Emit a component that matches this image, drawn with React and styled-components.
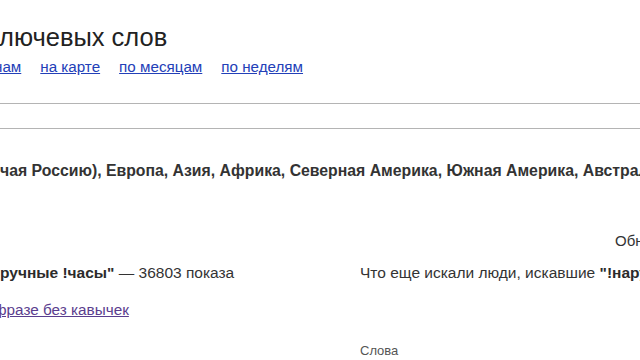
import React from 'react';
import styled, { createGlobalStyle } from 'styled-components';

const GlobalStyle = createGlobalStyle`
  html, body {
    margin: 0;
    padding: 0;
    background: #fff;
    overflow: hidden;
  }
  body {
    font-family: "Liberation Sans", Arial, sans-serif;
    color: #333;
  }
`;

const Page = styled.div`
  width: 640px;
  height: 360px;
  overflow: hidden;
  white-space: nowrap;
`;

const Line = styled.div`
  margin-left: ${(p) => p.shift || 0}px;
`;

const Title = styled(Line)`
  padding-top: 22px;
  font-size: 25.5px;
  line-height: 30px;
  color: #222;
`;

const Tabs = styled.div`
  display: flex;
  gap: 19px;
  margin-top: 6px;
  font-size: 15.2px;
  line-height: 18px;
  margin-left: ${(p) => p.shift || 0}px;
`;

const Tab = styled.a`
  color: #2340b8;
  text-decoration: underline;
  cursor: pointer;
`;

const SearchBar = styled.div`
  margin-top: 27px;
  height: 24px;
  border-top: 1px solid #b4b4b4;
  border-bottom: 1px solid #b4b4b4;
`;

const Regions = styled(Line)`
  margin-top: 33px;
  font-size: 15.8px;
  line-height: 18px;
  font-weight: bold;
  color: #333;
`;

const Meta = styled.div`
  margin-top: 52px;
  padding-left: 615px;
  font-size: 15px;
  line-height: 18px;
  color: #333;
`;

const Columns = styled.div`
  display: grid;
  grid-template-columns: 360px 1fr;
  margin-top: 14px;
`;

const Column = styled.div`
  display: flex;
  flex-direction: column;
`;

const Summary = styled(Line)`
  font-size: 15.5px;
  line-height: 18px;
  color: #333;
  b {
    color: #2b2b2b;
  }
`;

const Visited = styled.a`
  display: block;
  margin-top: 19px;
  margin-left: ${(p) => p.shift || 0}px;
  font-size: 15.3px;
  line-height: 18px;
  color: #5a3d8e;
  text-decoration: underline;
  cursor: pointer;
`;

const TableHead = styled.div`
  margin-top: 61px;
  font-size: 13px;
  line-height: 16px;
  color: #555;
`;

export default function App() {
  return (
    <Page>
      <GlobalStyle />
      <Title shift={-1}>лючевых слов</Title>
      <Tabs shift={-6}>
        <Tab>нам</Tab>
        <Tab>на карте</Tab>
        <Tab>по месяцам</Tab>
        <Tab>по неделям</Tab>
      </Tabs>
      <SearchBar />
      <Regions>
        чая Россию), Европа, Азия, Африка, Северная Америка, Южная Америка, Австралия и Океания
      </Regions>
      <Meta>Обновлено</Meta>
      <Columns>
        <Column>
          <Summary>
            <b>ручные !часы"</b> — 36803 показа
          </Summary>
          <Visited shift={-6}>фразе без кавычек</Visited>
        </Column>
        <Column>
          <Summary>
            Что еще искали люди, искавшие <b>"!наручные !часы"</b>
          </Summary>
          <TableHead>Слова</TableHead>
        </Column>
      </Columns>
    </Page>
  );
}
